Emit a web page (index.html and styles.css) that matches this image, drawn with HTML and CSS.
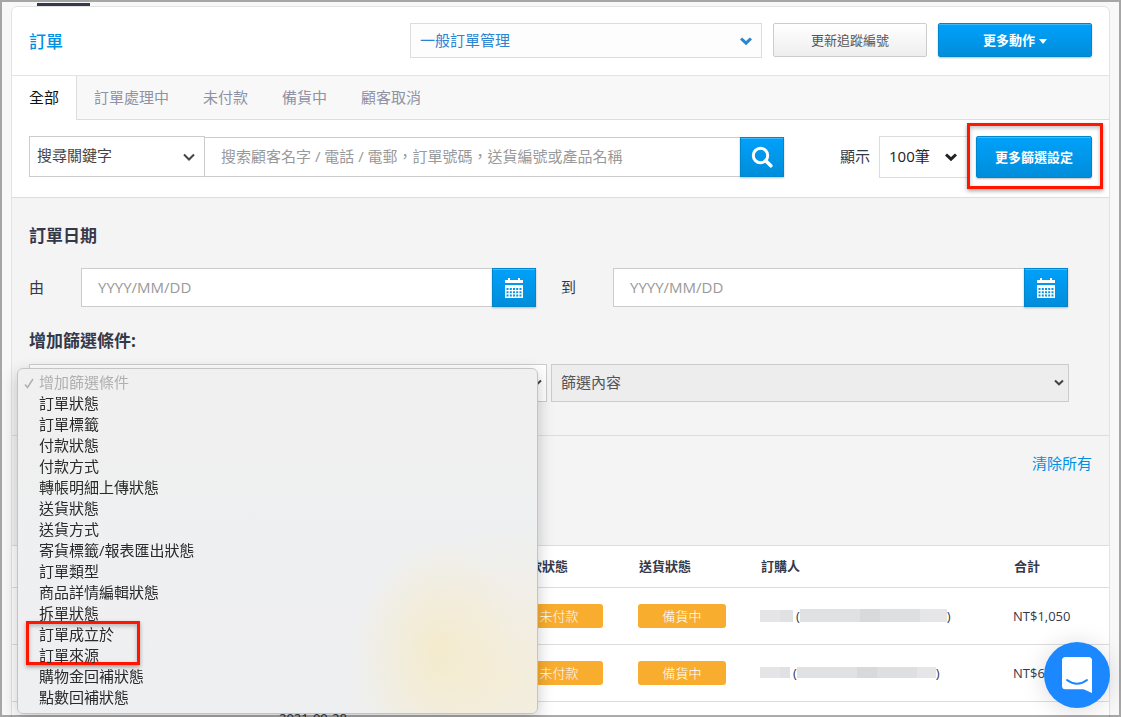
FILE: index.html
```html
<!DOCTYPE html>
<html lang="zh-Hant">
<head>
    <meta charset="utf-8">
    <title>訂單</title>
    <link rel="stylesheet" href="styles.css">
</head>
<body>

<div class="top-tab"></div>

<main class="card">
    <header class="card-header">
        <h1>訂單</h1>
        <div class="select select-view">
            <select aria-label="一般訂單管理">
                <option>一般訂單管理</option>
            </select>
            <svg class="chevron" width="12" height="8" viewBox="0 0 12 8"><path d="M1 1.5 6 6.2 11 1.5"/></svg>
        </div>
        <button class="btn btn-light">更新追蹤編號</button>
        <button class="btn btn-primary">更多動作<span class="caret"></span></button>
    </header>

    <nav class="tabs">
        <a href="#" class="active">全部</a>
        <a href="#">訂單處理中</a>
        <a href="#">未付款</a>
        <a href="#">備貨中</a>
        <a href="#">顧客取消</a>
    </nav>

    <form class="search-bar">
        <div class="search-group">
            <div class="select select-keyword">
                <select aria-label="搜尋關鍵字">
                    <option>搜尋關鍵字</option>
                </select>
                <svg class="chevron" width="12" height="8" viewBox="0 0 12 8"><path d="M1 1.5 6 6.5 11 1.5"/></svg>
            </div>
            <input type="text" aria-label="搜索" placeholder="搜索顧客名字 / 電話 / 電郵，訂單號碼，送貨編號或產品名稱">
            <button type="button" class="btn-icon" aria-label="搜索">
                <svg width="22" height="22" viewBox="0 0 22 22" fill="none" stroke="#fff">
                    <circle cx="9.5" cy="9.5" r="7.2" stroke-width="3"/>
                    <path d="M14.8 14.8 19.8 19.8" stroke-width="3.6" stroke-linecap="round"/>
                </svg>
            </button>
        </div>
        <label class="per-page-label" for="per-page">顯示</label>
        <div class="select select-count">
            <select id="per-page">
                <option>100筆</option>
            </select>
            <svg class="chevron" width="12" height="8" viewBox="0 0 12 8"><path d="M1 1.5 6 6.2 11 1.5"/></svg>
        </div>
        <div class="highlighted">
            <button type="button" class="btn btn-primary btn-filter">更多篩選設定</button>
        </div>
    </form>

    <section class="filters">
        <h2>訂單日期</h2>
        <div class="dates">
            <div class="date-field">
                <label for="date-from">由</label>
                <input type="text" id="date-from" placeholder="YYYY/MM/DD">
                <button class="btn-icon" aria-label="由">
                    <svg width="18" height="20" viewBox="0 0 18 20" fill="#fff">
                        <path d="M0 2h3V0h2v2h8V0h2v2h3v3H0z"/>
                        <path fill-rule="evenodd" d="M0 7h18v13H0zM1.500 10v2h2v-2zM4.800 10v2h2v-2zM8 10v2h2v-2zM11.200 10v2h2v-2zM14.500 10v2h2v-2zM1.500 13.200v2h2v-2zM4.800 13.200v2h2v-2zM8 13.200v2h2v-2zM11.200 13.200v2h2v-2zM14.500 13.200v2h2v-2zM1.500 16.500v2h2v-2zM4.800 16.500v2h2v-2zM8 16.500v2h2v-2zM11.200 16.500v2h2v-2zM14.500 16.500v2h2v-2z"/>
                    </svg>
                </button>
            </div>
            <div class="date-field">
                <label for="date-to">到</label>
                <input type="text" id="date-to" placeholder="YYYY/MM/DD">
                <button class="btn-icon" aria-label="到">
                    <svg width="18" height="20" viewBox="0 0 18 20" fill="#fff">
                        <path d="M0 2h3V0h2v2h8V0h2v2h3v3H0z"/>
                        <path fill-rule="evenodd" d="M0 7h18v13H0zM1.500 10v2h2v-2zM4.800 10v2h2v-2zM8 10v2h2v-2zM11.200 10v2h2v-2zM14.500 10v2h2v-2zM1.500 13.200v2h2v-2zM4.800 13.200v2h2v-2zM8 13.200v2h2v-2zM11.200 13.200v2h2v-2zM14.500 13.200v2h2v-2zM1.500 16.500v2h2v-2zM4.800 16.500v2h2v-2zM8 16.500v2h2v-2zM11.200 16.500v2h2v-2zM14.500 16.500v2h2v-2z"/>
                    </svg>
                </button>
            </div>
        </div>

        <h2>增加篩選條件:</h2>
        <div class="conditions">
            <div class="select">
                <select aria-label="增加篩選條件">
                    <option>增加篩選條件</option>
                </select>
                <svg class="chevron" width="10" height="7" viewBox="0 0 10 7"><path d="M1 1.5 5 5.300 9 1.5"/></svg>
                <ul class="menu">
                    <li class="selected">
                        <svg class="check" width="10" height="11" viewBox="0 0 10 11"><path d="M1 6.500 3.500 9.500 9 1"/></svg>增加篩選條件
                    </li>
                    <li>訂單狀態</li>
                    <li>訂單標籤</li>
                    <li>付款狀態</li>
                    <li>付款方式</li>
                    <li>轉帳明細上傳狀態</li>
                    <li>送貨狀態</li>
                    <li>送貨方式</li>
                    <li>寄貨標籤/報表匯出狀態</li>
                    <li>訂單類型</li>
                    <li>商品詳情編輯狀態</li>
                    <li>拆單狀態</li>
                    <li class="marked">訂單成立於</li>
                    <li>訂單來源</li>
                    <li>購物金回補狀態</li>
                    <li>點數回補狀態</li>
                </ul>
            </div>
            <div class="select">
                <select disabled aria-label="篩選內容">
                    <option>篩選內容</option>
                </select>
                <svg class="chevron" width="10" height="7" viewBox="0 0 10 7"><path d="M1 1.5 5 5.300 9 1.5"/></svg>
            </div>
        </div>
    </section>

    <div class="clear-bar">
        <a href="#">清除所有</a>
    </div>

    <table class="orders">
        <colgroup>
            <col class="col-number">
            <col class="col-date">
            <col class="col-payment">
            <col class="col-delivery">
            <col class="col-customer">
            <col class="col-total">
        </colgroup>
        <thead>
            <tr>
                <th></th>
                <th></th>
                <th>付款狀態</th>
                <th>送貨狀態</th>
                <th>訂購人</th>
                <th>合計</th>
            </tr>
        </thead>
        <tbody>
            <tr>
                <td></td>
                <td></td>
                <td><span class="badge">未付款</span></td>
                <td><span class="badge">備貨中</span></td>
                <td>
                    <div class="customer">
                        <span class="mask mask-name"></span>(<span class="mask mask-contact"></span>)
                    </div>
                </td>
                <td>NT$1,050</td>
            </tr>
            <tr>
                <td></td>
                <td></td>
                <td><span class="badge">未付款</span></td>
                <td><span class="badge">備貨中</span></td>
                <td>
                    <div class="customer short">
                        <span class="mask mask-name"></span>(<span class="mask mask-contact"></span>)
                    </div>
                </td>
                <td>NT$6</td>
            </tr>
            <tr class="next">
                <td></td>
                <td>2021-09-28</td>
                <td></td>
                <td></td>
                <td></td>
                <td></td>
            </tr>
        </tbody>
    </table>
</main>

<button class="chat" aria-label="Chat">
    <svg width="30" height="36" viewBox="0 0 30 36">
        <path fill="#fff" d="M3.500 0h23A3.500 3.500 0 0 1 30 3.500V36L21.500 32.300H3.500A3.500 3.500 0 0 1 0 28.800V3.500A3.500 3.500 0 0 1 3.500 0z"/>
        <path fill="none" stroke="#1b88ff" stroke-width="2" stroke-linecap="round" d="M5 23q10 7.500 20 0"/>
    </svg>
</button>

</body>
</html>
```

FILE: styles.css
```css
*, *::before, *::after {
    box-sizing: border-box;
}
body {
    height: 100vh;
    margin: 0;
    padding: 3px 11px 0;
    overflow: hidden;
    background: #f8f8f8;
    color: #34394a;
    font-family: "Open Sans", "Noto Sans CJK TC", sans-serif;
    font-size: 15px;
    line-height: 24px;
}
/* grey frame round the window */
body::after {
    content: "";
    position: fixed;
    inset: 0;
    border: 2px solid rgba(0,0,0,0.33);
    pointer-events: none;
}
h1, h2 {
    margin: 0;
    font-size: 17px;
    line-height: 24px;
}
a {
    color: #0091e4;
    text-decoration: none;
}
input, select, button {
    font-family: inherit;
    font-size: 15px;
}

.top-tab {
    width: 53px;
    height: 3px;
    margin-left: 26px;
    background: #34394d;
}
.card {
    background: #fff;
    border: 1px solid #e3e3e3;
    border-radius: 6px 6px 0 0;
}

/* Buttons */
.btn {
    height: 34px;
    padding: 0 0 2px;
    border: 1px solid #ccc;
    border-radius: 2px;
    font-size: 13px;
    cursor: pointer;
}
.btn-light {
    color: #555;
    background: linear-gradient(#fff, #eee);
}
.btn-primary, .btn-icon {
    color: #fff;
    border: 1px solid #0086cf;
    background: linear-gradient(#00a1fb, #008dda);
    box-shadow: inset 0 1px 0 rgba(255,255,255,0.25), 0 1px 2px rgba(0,0,0,0.25);
}
.btn-primary {
    font-weight: 600;
}
.btn-icon {
    display: flex;
    flex: 0 0 44px;
    align-items: center;
    justify-content: center;
    padding: 0;
}
.caret {
    display: inline-block;
    margin-left: 4px;
    border: 4px solid transparent;
    border-top: 5px solid #fff;
    border-bottom: 0;
    vertical-align: middle;
}

/* Fields */
input {
    flex: 1;
    min-width: 0;
    padding: 0 16px 2px;
    border: 1px solid #ccc;
    border-right: 0;
    border-radius: 0;
    background: #fff;
}
input::placeholder {
    color: #999;
}
.select {
    position: relative;
}
.select select {
    width: 100%;
    height: 100%;
    padding: 0 9px 2px;
    border: 1px solid #ccc;
    border-radius: 0;
    background: #fff;
    color: #444;
    appearance: none;
}
.select select:disabled {
    background: #ededed;
    color: #555;
    opacity: 1;
}
.chevron {
    position: absolute;
    top: 50%;
    right: 10px;
    margin-top: -4px;
    fill: none;
    stroke: #444;
    stroke-width: 2;
    pointer-events: none;
}

/* Header */
.card-header {
    display: flex;
    gap: 11px;
    padding: 16px 17px 17px;
    border-bottom: 1px solid #e3e3e3;
}
.card-header h1 {
    flex: 1;
    padding-top: 3px;
    color: #0091e4;
    font-weight: 500;
    line-height: 32px;
}
.card-header .btn {
    width: 154px;
}
.select-view {
    width: 352px;
    height: 35px;
}
.select-view select {
    border-color: #ddd;
    background: #fdfdfd;
    color: #2b84d2;
}
.select-view .chevron {
    stroke: #2b84d2;
    stroke-width: 3;
}

/* Tabs */
.tabs {
    display: flex;
    background: #f8f8f8;
    box-shadow: inset 0 -1px 0 #ddd;
}
.tabs a {
    padding: 9px 17px 11px;
    color: #8f92a5;
}
.tabs a.active {
    border-right: 1px solid #ddd;
    background: #fff;
    color: #111;
}

/* Search */
.search-bar {
    display: flex;
    align-items: flex-start;
    padding: 16px 17px 19px;
    border-bottom: 1px solid #ddd;
}
.search-group {
    display: flex;
    flex: 1;
    align-items: flex-end;
    height: 41px;
}
.search-group input, .search-group .btn-icon {
    height: 40px;
}
.search-group input {
    border-left: 0;
}
.select-keyword {
    width: 176px;
    height: 41px;
}
.select-keyword select {
    padding: 0 7px 4px;
}
.per-page-label {
    margin: 0 9px 0 56px;
    line-height: 40px;
}
.select-count {
    width: 90px;
    height: 42px;
    margin-right: 7px;
}
.select-count select {
    border-color: #ddd;
    color: #222;
}
.select-count .chevron {
    right: 12px;
    stroke: #222;
    stroke-width: 3;
}
.highlighted {
    position: relative;
}
.highlighted::after, .marked::after {
    content: "";
    position: absolute;
    border: 3px solid #ff1500;
    box-shadow: 0 2px 4px rgba(0,0,0,0.35), inset 0 2px 4px rgba(0,0,0,0.25);
    pointer-events: none;
}
.highlighted::after {
    inset: -13px -11px -11px -9px;
}
.btn-filter {
    display: block;
    width: 116px;
    height: 42px;
}

/* Filters */
.filters {
    padding: 26px 16px 33px 17px;
    border-bottom: 1px solid #ddd;
    background: #f4f4f4;
}
.dates {
    display: grid;
    grid-template-columns: 1fr 1fr;
    margin: 20px 0 22px;
}
.date-field {
    display: flex;
    height: 39px;
    padding-right: 25px;
}
.date-field label {
    width: 52px;
    line-height: 39px;
}
.conditions {
    display: grid;
    grid-template-columns: 1fr 1fr;
    gap: 4px;
    height: 38px;
    margin: 11px 24px 0 0;
}
.conditions .chevron {
    right: 5px;
}

/* Open list of conditions */
.menu {
    position: absolute;
    z-index: 2;
    top: 4px;
    left: -12px;
    width: calc(100% + 3px);
    margin: 0;
    padding: 3px 0 5px;
    border: 1px solid #c4c4c4;
    border-radius: 6px;
    background:
        radial-gradient(ellipse 80px 110px at 420px 280px, rgba(247,231,178,0.45), rgba(247,231,178,0)),
        radial-gradient(ellipse 170px 150px at 490px 310px, rgba(247,236,205,0.65), rgba(247,236,205,0)),
        linear-gradient(#f0f0f0, #eeeff1);
    box-shadow: 0 5px 16px rgba(0,0,0,0.22);
    color: #2a2a2a;
    line-height: 21px;
    list-style: none;
}
.menu li {
    position: relative;
    padding-left: 21px;
}
.menu .selected {
    color: #b0b0b0;
}
.check {
    position: absolute;
    top: 6px;
    left: 6px;
    fill: none;
    stroke: #b0b0b0;
    stroke-width: 1.5;
}
.marked::after {
    top: -3px;
    left: 8px;
    width: 114px;
    height: 44px;
}

.clear-bar {
    padding: 15px 17px 70px;
    border-bottom: 1px solid #ddd;
    background: #f4f4f4;
    text-align: right;
}

/* Orders */
.orders {
    width: 100%;
    border-collapse: collapse;
    table-layout: fixed;
    font-size: 13px;
}
.col-number { width: 267px; }
.col-date { width: 236px; }
.col-payment { width: 123px; }
.col-delivery { width: 122px; }
.col-customer { width: 253px; }
.col-total { width: 96px; }
.orders th, .orders td {
    padding: 0;
    border-bottom: 1px solid #ddd;
    text-align: left;
}
.orders th {
    height: 41px;
    padding: 0 0 1px 1px;
    font-weight: 600;
}
.orders td {
    height: 57px;
}
.orders .next td {
    padding-top: 4px;
    vertical-align: top;
}
.badge {
    display: block;
    width: 88px;
    border-radius: 3px;
    background: #f9ad2f;
    color: #fff;
    font-weight: 300;
    text-align: center;
}
.customer {
    display: flex;
    align-items: center;
}
.mask {
    height: 13px;
    background: linear-gradient(90deg, #e5e5e7 20px, #e0e1e3 20px);
}
.mask-name {
    width: 33px;
    height: 12px;
    margin-right: 3px;
}
.mask-contact {
    width: 147px;
    background: linear-gradient(90deg, #e0e1e3 60px, #d8d9db 60px, #d8d9db 80px, #dedfe1 80px, #dedfe1 120px, #e6e6e8 120px);
}
.short .mask {
    height: 11px;
}
.short .mask-name {
    width: 30px;
}
.short .mask-contact {
    width: 139px;
}

.chat {
    position: fixed;
    z-index: 3;
    right: 11px;
    bottom: 9px;
    display: flex;
    align-items: center;
    justify-content: center;
    width: 66px;
    height: 66px;
    padding: 0;
    border: 0;
    border-radius: 50%;
    background: #1b88ff;
    box-shadow: 0 2px 24px rgba(0,0,0,0.15);
}
```
